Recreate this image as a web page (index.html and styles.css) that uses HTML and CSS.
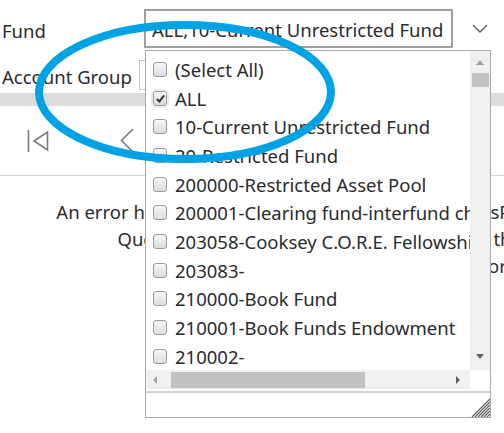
FILE: index.html
```html
<!DOCTYPE html>
<html lang="en">

<head>
    <meta charset="UTF-8">
    <meta name="viewport" content="width=device-width, initial-scale=1.0">
    <title>Report Parameters</title>
    <link rel="stylesheet" href="styles.css">
</head>

<body>
    <div class="params">
        <div class="param-row">
            <span class="param-label">Fund</span>
            <div class="select-box">ALL,10-Current Unrestricted Fund</div>
            <svg class="chevron" viewBox="0 0 16 9">
                <path d="M1 1 L8 8 L15 1" fill="none" stroke="#555" stroke-width="1.3" />
            </svg>
        </div>
        <div class="param-row group-row">
            <span class="param-label">Account Group</span>
            <div class="text-box"></div>
        </div>
    </div>

    <div class="splitter"></div>

    <div class="toolbar">
        <svg class="nav-first" viewBox="0 0 22 24">
            <path d="M1.5 1 V23" stroke="#7a7a7a" stroke-width="1.6" />
            <path d="M20.5 3 V21 L7 12 Z" fill="none" stroke="#7a7a7a" stroke-width="1.6" stroke-linejoin="miter" />
        </svg>
        <svg class="nav-prev" viewBox="0 0 14 25">
            <path d="M13 1 L1.5 12.5 L13 24" fill="none" stroke="#7a7a7a" stroke-width="1.6" />
        </svg>
    </div>

    <div class="report-body">
        <p>An error has occurred during report processing. (rsProcessingAborted)</p>
        <p>Query execution failed for dataset 'dsFund' that is in use.</p>
        <p>Contact your system administrators.</p>
    </div>

    <!-- multi-select dropdown, open over the report -->
    <div class="dropdown">
        <div class="dropdown-scroll">
            <div class="item-list">
                <div class="item"><span class="check"></span>(Select All)</div>
                <div class="item"><span class="check checked"><svg viewBox="0 0 12 12"><path d="M2 6.5 L4.8 9.2 L10 2.5" fill="none" stroke="#333" stroke-width="2.2" /></svg></span>ALL</div>
                <div class="item"><span class="check"></span>10-Current Unrestricted Fund</div>
                <div class="item"><span class="check"></span>20-Restricted Fund</div>
                <div class="item"><span class="check"></span>200000-Restricted Asset Pool</div>
                <div class="item"><span class="check"></span>200001-Clearing fund-interfund chrgs</div>
                <div class="item"><span class="check"></span>203058-Cooksey C.O.R.E. Fellowship</div>
                <div class="item"><span class="check"></span>203083-</div>
                <div class="item"><span class="check"></span>210000-Book Fund</div>
                <div class="item"><span class="check"></span>210001-Book Funds Endowment</div>
                <div class="item"><span class="check"></span>210002-</div>
                <div class="item"><span class="check"></span>210003-</div>
            </div>
            <div class="vscroll">
                <span class="arrow-up"></span>
                <span class="vthumb"></span>
                <span class="spacer"></span>
                <span class="arrow-down"></span>
            </div>
            <div class="hscroll">
                <span class="arrow-left"></span>
                <span class="hthumb"></span>
                <span class="spacer"></span>
                <span class="arrow-right"></span>
            </div>
            <div class="corner"></div>
        </div>
        <div class="dropdown-footer">
            <svg class="grip" viewBox="0 0 19 19">
                <path d="M19 1 L1 19 M19 4 L4 19 M19 7 L7 19 M19 10 L10 19 M19 13 L13 19 M19 16 L16 19" stroke="#5a5a5a" stroke-width="1.2" />
            </svg>
        </div>
    </div>

    <svg class="annotation" viewBox="0 0 504 433">
        <ellipse cx="185" cy="92" rx="146" ry="67" fill="none" stroke="#00a2e6" stroke-width="8" />
    </svg>
</body>

</html>
```

FILE: styles.css
```css
* {
    box-sizing: border-box;
}

body {
    font-family: "Noto Sans", "Open Sans", sans-serif;
    font-size: 18.5px;
    color: #2b2b2b;
    background-color: white;
    margin: 0;
    width: 504px;
    height: 433px;
    overflow: hidden;
    position: relative;
}

.params {
    padding-top: 9px;
}

.param-row {
    display: flex;
    align-items: center;
}

.param-label {
    width: 144px;
    padding: 3px 0 0 2px;
    white-space: nowrap;
}

.select-box {
    width: 309px;
    height: 39px;
    border: 2px solid #a0a0a0;
    padding: 3px 6px 0;
    line-height: 32px;
    white-space: nowrap;
    overflow: hidden;
}

.chevron {
    width: 16px;
    height: 9px;
    margin-left: 19px;
}

.group-row {
    margin-top: 12px;
}

.group-row .param-label {
    width: 139px;
}

.text-box {
    width: 150px;
    height: 30px;
    border: 1px solid #c4c4c4;
}

.splitter {
    height: 13px;
    margin-top: 3px;
    background-color: #dcdcdc;
}

.toolbar {
    height: 70px;
    border-bottom: 1px solid #d0d0d0;
    display: flex;
    align-items: center;
    padding-left: 27px;
}

.nav-first {
    width: 22px;
    height: 24px;
}

.nav-prev {
    width: 14px;
    height: 25px;
    margin-left: 71px;
}

.report-body {
    width: 726px;
    padding-top: 22px;
    text-align: center;
    line-height: 27px;
}

.report-body p {
    margin: 0;
    white-space: nowrap;
}

/* dropdown */

.dropdown {
    position: absolute;
    left: 145px;
    top: 50px;
    width: 346px;
    height: 368px;
    border: 1px solid #a8a8a8;
    background-color: white;
    display: flex;
    flex-direction: column;
}

.dropdown-scroll {
    display: grid;
    grid-template-columns: 1fr 20px;
    grid-template-rows: 319px 19px;
}

.item-list {
    overflow: hidden;
    padding-top: 4px;
}

.item {
    display: flex;
    align-items: center;
    gap: 8px;
    height: 28.7px;
    padding-left: 7px;
    white-space: nowrap;
}

.check {
    flex: none;
    width: 14px;
    height: 15px;
    border: 1px solid #9c9c9c;
    border-radius: 3px;
    background: linear-gradient(#f6f6f6, #dcdcdc);
    display: flex;
    align-items: center;
    justify-content: center;
}

.check.checked {
    box-shadow: 0 0 0 2px #ececec;
}

.check svg {
    width: 11px;
    height: 11px;
}

.vscroll {
    background-color: #f0f0f0;
    display: flex;
    flex-direction: column;
    align-items: center;
    padding: 9px 0 11px;
}

.vthumb {
    width: 17px;
    height: 14px;
    margin-top: 8px;
    background-color: #c1c1c1;
}

.spacer {
    flex: 1;
}

.arrow-up {
    border-left: 4.5px solid transparent;
    border-right: 4.5px solid transparent;
    border-bottom: 5px solid #a3a3a3;
}

.arrow-down {
    border-left: 4.5px solid transparent;
    border-right: 4.5px solid transparent;
    border-top: 5px solid #5e5e5e;
}

.hscroll {
    background-color: #f0f0f0;
    display: flex;
    align-items: center;
    padding: 0 10px 0 7px;
}

.hthumb {
    width: 194px;
    height: 16px;
    margin-left: 14px;
    background-color: #c1c1c1;
}

.arrow-left {
    border-top: 4px solid transparent;
    border-bottom: 4px solid transparent;
    border-right: 4px solid #a3a3a3;
}

.arrow-right {
    border-top: 4px solid transparent;
    border-bottom: 4px solid transparent;
    border-left: 4px solid #5e5e5e;
}

.corner {
    background-color: white;
}

.dropdown-footer {
    flex: 1;
    margin-top: 2px;
    border-top: 2px solid #d2d2d2;
    display: flex;
    justify-content: flex-end;
    align-items: flex-end;
}

.grip {
    width: 19px;
    height: 19px;
}

.annotation {
    position: absolute;
    left: 0;
    top: 0;
    width: 504px;
    height: 433px;
    pointer-events: none;
}
```
